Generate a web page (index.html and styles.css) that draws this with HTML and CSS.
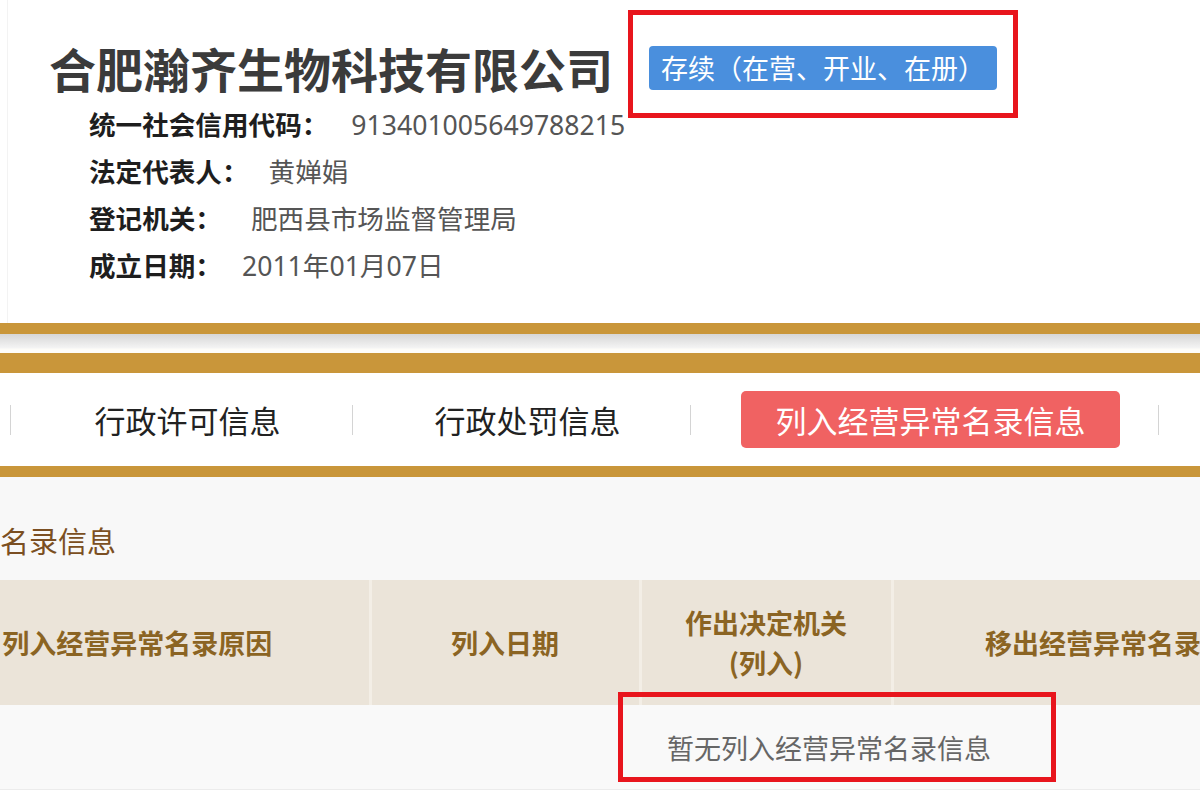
FILE: index.html
```html
<!DOCTYPE html>
<html>

<head>
    <meta charset="UTF-8">
    <title>企业信用信息</title>
    <link rel="stylesheet" href="styles.css">
</head>

<body>
    <div class="page">
        <div class="company">
            <div class="title-row">
                <h1>合肥瀚齐生物科技有限公司</h1>
                <span class="status">存续（在营、开业、在册）</span>
            </div>
            <div class="info">
                <div class="row"><span class="label">统一社会信用代码：</span><span class="value num">913401005649788215</span></div>
                <div class="row"><span class="label">法定代表人：</span><span class="value">黄婵娟</span></div>
                <div class="row"><span class="label">登记机关：</span><span class="value wide">肥西县市场监督管理局</span></div>
                <div class="row"><span class="label">成立日期：</span><span class="value"><span class="num">2011</span>年<span class="num">01</span>月<span class="num">07</span>日</span></div>
            </div>
        </div>

        <div class="band"></div>

        <div class="tabs">
            <span class="sep"></span>
            <div class="tab t1">行政许可信息</div>
            <span class="sep"></span>
            <div class="tab t2">行政处罚信息</div>
            <span class="sep"></span>
            <div class="tab t3"><span class="tab-active">列入经营异常名录信息</span></div>
            <span class="sep"></span>
        </div>

        <div class="content">
            <div class="section-title"><span>列入经营异常名录信息</span></div>
            <table class="grid">
                <colgroup>
                    <col style="width:464px">
                    <col style="width:270px">
                    <col style="width:252px">
                    <col style="width:456px">
                    <col style="width:404px">
                </colgroup>
                <thead>
                    <tr>
                        <th>列入经营异常名录原因</th>
                        <th>列入日期</th>
                        <th>作出决定机关<br>(列入)</th>
                        <th>移出经营异常名录原因</th>
                        <th>移出日期</th>
                    </tr>
                </thead>
                <tbody>
                    <tr>
                        <td colspan="5">暂无列入经营异常名录信息</td>
                    </tr>
                </tbody>
            </table>
        </div>

        <div class="mark mark-status"></div>
        <div class="mark mark-empty"></div>
    </div>
</body>

</html>
```

FILE: styles.css
```css
html,
body {
    margin: 0;
    padding: 0;
    background: #fff;
}

body {
    font-family: "Noto Sans CJK SC", sans-serif;
}

.page {
    position: relative;
    width: 1200px;
    height: 800px;
    overflow: hidden;
}

.num {
    font-family: "Noto Sans", "Noto Sans CJK SC", sans-serif;
}

/* company header */
.company {
    height: 323px;
    box-sizing: border-box;
    padding-top: 38px;
    border-left: 1px solid #f3f3f3;
    margin-left: 7px;
}

.title-row {
    display: flex;
    align-items: center;
    height: 60px;
    margin-bottom: 2px;
    padding-left: 41px;
}

.title-row h1 {
    flex: none;
    margin: 0;
    font-size: 47px;
    font-weight: bold;
    color: #3b3b3b;
    line-height: 60px;
}

.status {
    flex: none;
    margin-left: 36px;
    height: 44px;
    line-height: 44px;
    padding: 0 12px;
    background: #4a8fdd;
    color: #fff;
    font-size: 27px;
    border-radius: 4px;
}

.info {
    padding-left: 81px;
}

.row {
    height: 47px;
    line-height: 47px;
    font-size: 26.6px;
    white-space: nowrap;
}

.label {
    font-weight: bold;
    color: #1e1e1e;
}

.value {
    color: #555;
    margin-left: 20px;
}

.value.num {
    margin-left: 23px;
}

.value.wide {
    margin-left: 29px;
}

/* gold stripes */
.band {
    height: 19px;
    border-top: 11px solid #c9963a;
    border-bottom: 20px solid #c9963a;
    background: linear-gradient(#d6d6d6, #f4f4f4 14px, #fdfcf8 15px);
}

.tabs {
    display: flex;
    align-items: center;
    height: 93px;
    padding-left: 10px;
    background: #fff;
    border-bottom: 11px solid #c9963a;
}

.sep {
    width: 1px;
    height: 30px;
    background: #d4d4d4;
}

.tab {
    box-sizing: border-box;
    padding-left: 12px;
    text-align: center;
    font-size: 31px;
    color: #222;
}

.t1 {
    width: 341px;
}

.t2 {
    width: 337px;
}

.t3 {
    width: 467px;
}

.tab-active {
    display: inline-block;
    width: 379px;
    height: 57px;
    line-height: 57px;
    background: #f06262;
    color: #fff;
    border-radius: 5px;
}

/* abnormal list */
.content {
    background: #f8f8f8;
    height: 313px;
    box-sizing: border-box;
    padding-top: 43px;
    border-bottom: 2px solid #ececec;
}

.section-title {
    height: 40px;
    line-height: 40px;
    font-size: 29px;
    color: #7b4f22;
    white-space: nowrap;
}

.section-title span {
    margin-left: -174px;
}

.grid {
    margin-top: 20px;
    margin-left: -94px;
    width: 1846px;
    table-layout: fixed;
    border-collapse: collapse;
}

.grid th {
    height: 125px;
    background: #ebe4d9;
    color: #8b6423;
    font-size: 27px;
    font-weight: bold;
    line-height: 40px;
    border-left: 3px solid #f3eee6;
    padding: 0;
}

.grid th:first-child {
    border-left: none;
}

.grid td {
    height: 84px;
    text-align: center;
    font-size: 27px;
    color: #666;
    background: #f9f9f9;
    padding: 0;
}

/* red annotation frames */
.mark {
    position: absolute;
    border: 5px solid #e8151d;
    box-sizing: border-box;
}

.mark-status {
    left: 628px;
    top: 10px;
    width: 390px;
    height: 108px;
}

.mark-empty {
    left: 618px;
    top: 692px;
    width: 438px;
    height: 90px;
}
```
